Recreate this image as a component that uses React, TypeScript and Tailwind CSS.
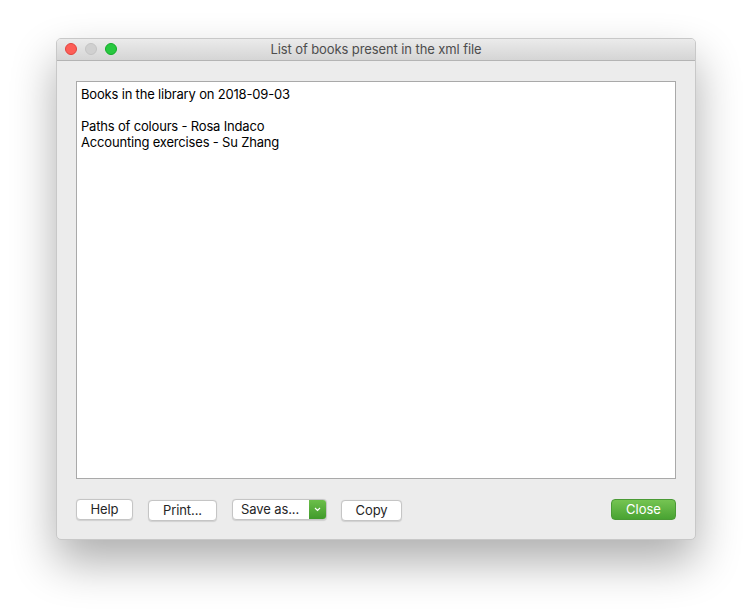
import React from 'react';

const font = { fontFamily: 'Inter, "Liberation Sans", sans-serif' };

const PlainButton: React.FC<{ label: string; width: string }> = ({ label, width }) => (
  <button
    className={`${width} h-[21px] rounded-[4px] border border-[#c5c5c5] bg-white text-[13px] leading-none tracking-[-0.1px] text-[#262626] shadow-[0_0.5px_1px_rgba(0,0,0,0.12)]`}
  >
    {label}
  </button>
);

export default function App() {
  return (
    <div className="min-h-[613px] w-[752px] bg-white pl-[56px] pt-[38px]" style={font}>
      <div className="flex h-[502px] w-[640px] flex-col overflow-hidden rounded-[5px] border border-[#c8c8c8] bg-[#ececec] shadow-[0_22px_45px_rgba(0,0,0,0.32)]">
        {/* title bar */}
        <div className="relative flex h-[22px] shrink-0 items-center justify-center border-b border-[#b4b4b4] bg-gradient-to-b from-[#ebebeb] to-[#d5d5d5]">
          <div className="absolute left-[8px] top-[4px] flex gap-[8px]">
            <span className="h-[12px] w-[12px] rounded-full border border-[#e0443e] bg-[#fd5e57]" />
            <span className="h-[12px] w-[12px] rounded-full border border-[#c4c4c4] bg-[#d0d0d0]" />
            <span className="h-[12px] w-[12px] rounded-full border border-[#12ac28] bg-[#28c840]" />
          </div>
          <span className="text-[13px] tracking-[-0.1px] text-[#4d4d4d]">List of books present in the xml file</span>
        </div>

        {/* body */}
        <div className="flex flex-1 flex-col px-[19px] pb-[18px] pt-[20px]">
          <div className="h-[398px] w-[600px] border border-[#a9a9a9] bg-white px-[4px] pt-[4px] text-[13px] leading-[16px] tracking-[-0.18px] text-black">
            <p>Books in the library on 2018-09-03</p>
            <p>&nbsp;</p>
            <p>Paths of colours - Rosa Indaco</p>
            <p>Accounting exercises - Su Zhang</p>
          </div>

          <div className="mt-[18px] flex items-center">
            <PlainButton label="Help" width="w-[57px]" />
            <div className="ml-[15px]">
              <PlainButton label="Print..." width="w-[69px]" />
            </div>
            <div className="ml-[15px] flex h-[21px] w-[95px] overflow-hidden rounded-[4px] border border-[#c5c5c5] bg-white shadow-[0_0.5px_1px_rgba(0,0,0,0.12)]">
              <span className="flex flex-1 items-center pl-[8px] text-[13px] leading-none tracking-[-0.1px] text-[#262626]">Save as...</span>
              <span className="flex w-[17px] items-center justify-center bg-gradient-to-b from-[#6cbf4a] to-[#3f9a2a]">
                <svg width="7" height="5" viewBox="0 0 7 5" fill="none">
                  <path d="M1 1l2.5 2.5L6 1" stroke="white" strokeWidth="1.2" />
                </svg>
              </span>
            </div>
            <div className="ml-[14px]">
              <PlainButton label="Copy" width="w-[61px]" />
            </div>
            <button className="ml-auto h-[21px] w-[65px] rounded-[4px] border border-[#4a9a35] bg-gradient-to-b from-[#75c452] to-[#48a332] text-[13px] leading-none text-white">
              Close
            </button>
          </div>
        </div>
      </div>
    </div>
  );
}
